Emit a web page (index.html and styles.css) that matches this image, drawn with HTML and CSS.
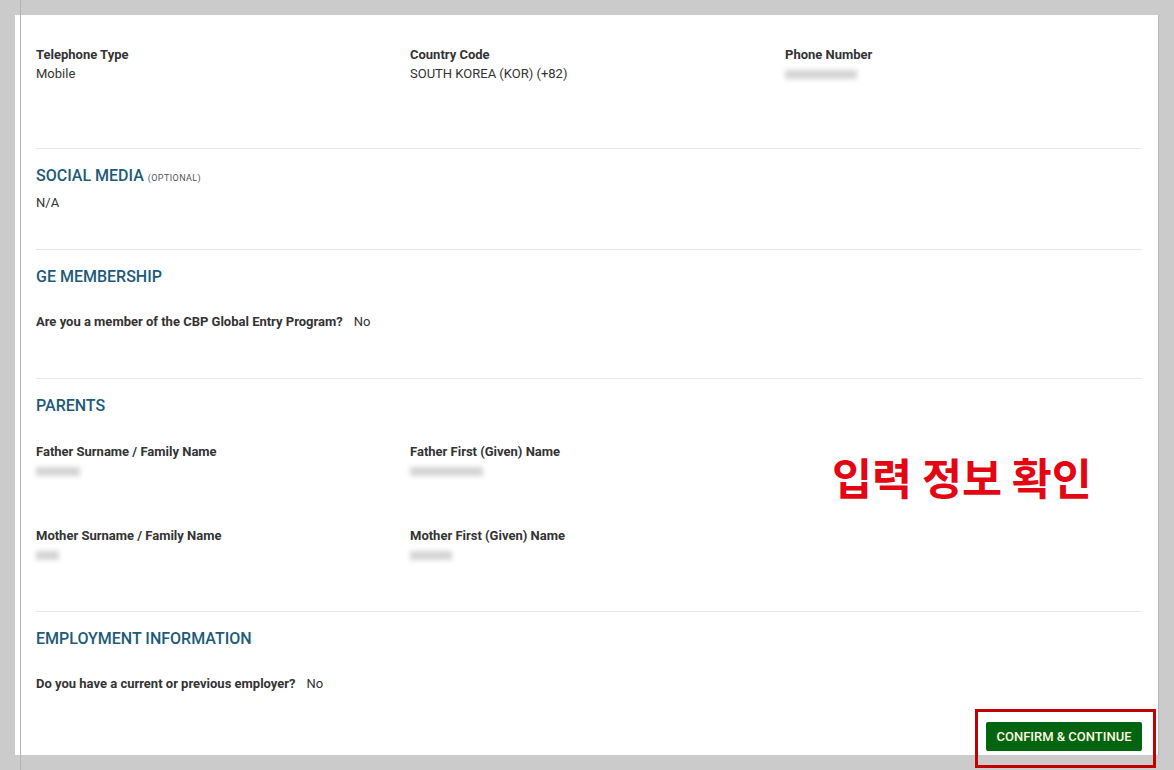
FILE: index.html
```html
<!DOCTYPE html>
<html>
<head>
    <meta name="viewport" content="width=device-width, initial-scale=1.0">
    <link rel="stylesheet" href="styles.css">
</head>
<body>
    <div class="frame-line"></div>

    <div class="review">
        <div class="section section-first">
            <div class="row">
                <div class="field">
                    <div class="field-label">Telephone Type</div>
                    <div class="field-value">Mobile</div>
                </div>
                <div class="field">
                    <div class="field-label">Country Code</div>
                    <div class="field-value">SOUTH KOREA (KOR) (+82)</div>
                </div>
                <div class="field">
                    <div class="field-label">Phone Number</div>
                    <div class="field-value"><span class="masked" style="width: 72px"></span></div>
                </div>
            </div>
        </div>

        <div class="section section-social">
            <h4>SOCIAL MEDIA <small>(OPTIONAL)</small></h4>
            <div class="field-value">N/A</div>
        </div>

        <div class="section">
            <h4>GE MEMBERSHIP</h4>
            <div class="question">
                <span class="field-label">Are you a member of the CBP Global Entry Program?</span>
                <span class="field-value">No</span>
            </div>
        </div>

        <div class="section">
            <h4>PARENTS</h4>
            <div class="row">
                <div class="field">
                    <div class="field-label">Father Surname / Family Name</div>
                    <div class="field-value"><span class="masked" style="width: 44px"></span></div>
                </div>
                <div class="field">
                    <div class="field-label">Father First (Given) Name</div>
                    <div class="field-value"><span class="masked" style="width: 73px"></span></div>
                </div>
            </div>
            <div class="row row-spaced">
                <div class="field">
                    <div class="field-label">Mother Surname / Family Name</div>
                    <div class="field-value"><span class="masked" style="width: 23px"></span></div>
                </div>
                <div class="field">
                    <div class="field-label">Mother First (Given) Name</div>
                    <div class="field-value"><span class="masked" style="width: 42px"></span></div>
                </div>
            </div>
        </div>

        <div class="section section-last">
            <h4>EMPLOYMENT INFORMATION</h4>
            <div class="question">
                <span class="field-label">Do you have a current or previous employer?</span>
                <span class="field-value">No</span>
            </div>
            <div class="actions">
                <button>CONFIRM &amp; CONTINUE</button>
            </div>
        </div>
    </div>

    <!-- annotations -->
    <div class="note">입력 정보 확인</div>
    <div class="note-box"></div>
</body>
</html>
```

FILE: styles.css
```css
html, body {
    margin: 0;
    padding: 0;
}

body {
    background-color: #cbcbcb;
    font-family: Roboto, 'Liberation Sans', Arial, sans-serif;
    color: #333;
    height: 770px;
    overflow: hidden;
    padding: 15px 0 0 15px;
    box-sizing: border-box;
}

.frame-line {
    position: absolute;
    left: 20px;
    top: 0;
    width: 1px;
    height: 770px;
    background-color: #b4b4b4;
}

.review {
    width: 1144px;
    height: 740px;
    box-sizing: border-box;
    background-color: #ffffff;
    border-right: 1px solid #b8b8b8;
    padding: 30px 16px 0 21px;
}

.section {
    border-bottom: 1px solid #e8e8e8;
    padding: 17px 0 47px 0;
}

.section-first {
    padding: 0 0 65px 0;
}

.section-social {
    padding-bottom: 37px;
}

.section-last {
    border-bottom: none;
    padding-bottom: 0;
}

h4 {
    margin: 0;
    font-size: 16px;
    line-height: 20px;
    font-weight: 500;
    color: #1d5b78;
}

h4 small {
    font-size: 9px;
    font-weight: 400;
    color: #555;
    letter-spacing: 0.4px;
}

.section-social h4 {
    margin-bottom: 5px;
}

.row {
    display: grid;
    grid-template-columns: 374px 375px 1fr;
}

.section .row:first-of-type {
    margin-top: 26px;
}

.question {
    margin-top: 24px;
}

.section-first .row:first-of-type {
    margin-top: 0;
}

.row-spaced {
    margin-top: 46px;
}

.field-label {
    font-size: 13px;
    line-height: 19px;
    font-weight: 700;
    color: #333;
}

.field-value {
    font-size: 13px;
    line-height: 19px;
    color: #333;
}

.question .field-label {
    margin-right: 7px;
}

.masked {
    display: inline-block;
    height: 9px;
    vertical-align: middle;
    background-color: #d4d4d4;
    filter: blur(2.5px);
}

.actions {
    display: flex;
    justify-content: flex-end;
    margin-top: 29px;
}

button {
    background-color: #05640f;
    color: #fdfbe2;
    border: none;
    border-radius: 2px;
    height: 29px;
    width: 156px;
    padding: 0;
    font-family: Roboto, 'Liberation Sans', Arial, sans-serif;
    font-size: 13px;
    font-weight: 500;
    cursor: pointer;
}

.note {
    position: absolute;
    left: 832px;
    top: 452px;
    font-family: 'Noto Sans CJK KR', sans-serif;
    font-size: 43.5px;
    font-weight: 700;
    line-height: 50px;
    color: #e30613;
}

.note-box {
    position: absolute;
    left: 975px;
    top: 709px;
    width: 175px;
    height: 53px;
    border: 3px solid #c20000;
}
```
